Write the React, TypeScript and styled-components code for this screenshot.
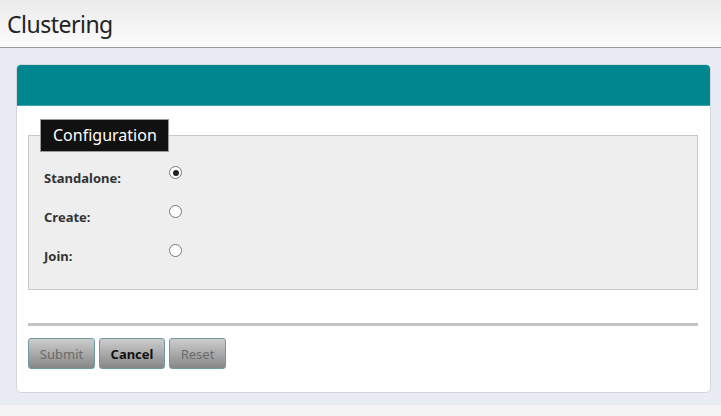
import React from 'react';
import styled, { createGlobalStyle } from 'styled-components';

const GlobalStyle = createGlobalStyle`
  html, body {
    margin: 0;
    padding: 0;
    background: #f3f3f4;
    font-family: "Noto Sans", "Open Sans", sans-serif;
  }
`;

const PageHeader = styled.header`
  height: 47px;
  background: linear-gradient(to bottom, #ebebeb, #fbfbfb);
  border-bottom: 1px solid #9a9a9a;
  display: flex;
  align-items: center;
  padding-left: 7px;
`;

const PageTitle = styled.h1`
  margin: 0;
  font-size: 23px;
  font-weight: 400;
  color: #222;
  letter-spacing: -0.5px;
`;

const Content = styled.main`
  background: #e9ecf4;
  padding: 16px 10px 12px 16px;
`;

const Card = styled.section`
  background: #fff;
  border: 1px solid #d4d6dc;
  border-radius: 5px;
  overflow: hidden;
`;

const CardHeader = styled.div`
  height: 40px;
  background: #00868f;
  border-bottom: 1px solid #3fa5ac;
`;

const CardBody = styled.div`
  padding: 13px 12px 23px 11px;
`;

const Fieldset = styled.fieldset`
  margin: 0;
  padding: 4px 0 16px 15px;
  background: #eeeeee;
  border: 1px solid #c8c8c8;
  min-width: 0;
`;

const Legend = styled.legend`
  background: #111;
  color: #fff;
  font-size: 16px;
  padding: 3px 11px 4px 12px;
  border: 1px solid #9a9a9a;
  margin-left: -4px;
  line-height: 24px;
`;

const Row = styled.div`
  display: grid;
  grid-template-columns: 125px 20px;
  align-items: start;
  height: 39px;
`;

const Label = styled.label`
  font-size: 13px;
  font-weight: 700;
  color: #333;
  padding-top: 13px;
`;

const Radio = styled.span<{ $checked?: boolean }>`
  width: 11px;
  height: 11px;
  border: 1px solid #777;
  border-radius: 50%;
  background: #fff;
  margin-top: 10px;
  display: flex;
  align-items: center;
  justify-content: center;

  &::after {
    content: '';
    width: 6px;
    height: 6px;
    border-radius: 50%;
    background: #222;
    display: ${p => (p.$checked ? 'block' : 'none')};
  }
`;

const Separator = styled.hr`
  margin: 33px 0 12px 0;
  border: none;
  height: 3px;
  background: #c4c4c4;
`;

const Actions = styled.div`
  display: flex;
  gap: 4px;
`;

const Button = styled.button<{ $primary?: boolean; $width: number }>`
  width: ${p => p.$width}px;
  height: 31px;
  padding: 0;
  border: 1px solid #6f9aa0;
  border-radius: 3px;
  background: linear-gradient(to bottom, #cdcdcd, #878787);
  font-family: "Noto Sans", "Open Sans", sans-serif;
  font-size: 13px;
  font-weight: ${p => (p.$primary ? 700 : 400)};
  color: ${p => (p.$primary ? '#111' : '#6a6a6a')};
`;

const rows = [
  { label: 'Standalone:', checked: true },
  { label: 'Create:', checked: false },
  { label: 'Join:', checked: false },
];

const App: React.FC = () => {
  return (
    <>
      <GlobalStyle />
      <PageHeader>
        <PageTitle>Clustering</PageTitle>
      </PageHeader>
      <Content>
        <Card>
          <CardHeader />
          <CardBody>
            <Fieldset>
              <Legend>Configuration</Legend>
              {rows.map(r => (
                <Row key={r.label}>
                  <Label>{r.label}</Label>
                  <Radio $checked={r.checked} />
                </Row>
              ))}
            </Fieldset>
            <Separator />
            <Actions>
              <Button $width={67}>Submit</Button>
              <Button $width={66} $primary>Cancel</Button>
              <Button $width={57}>Reset</Button>
            </Actions>
          </CardBody>
        </Card>
      </Content>
    </>
  );
};

export default App;
